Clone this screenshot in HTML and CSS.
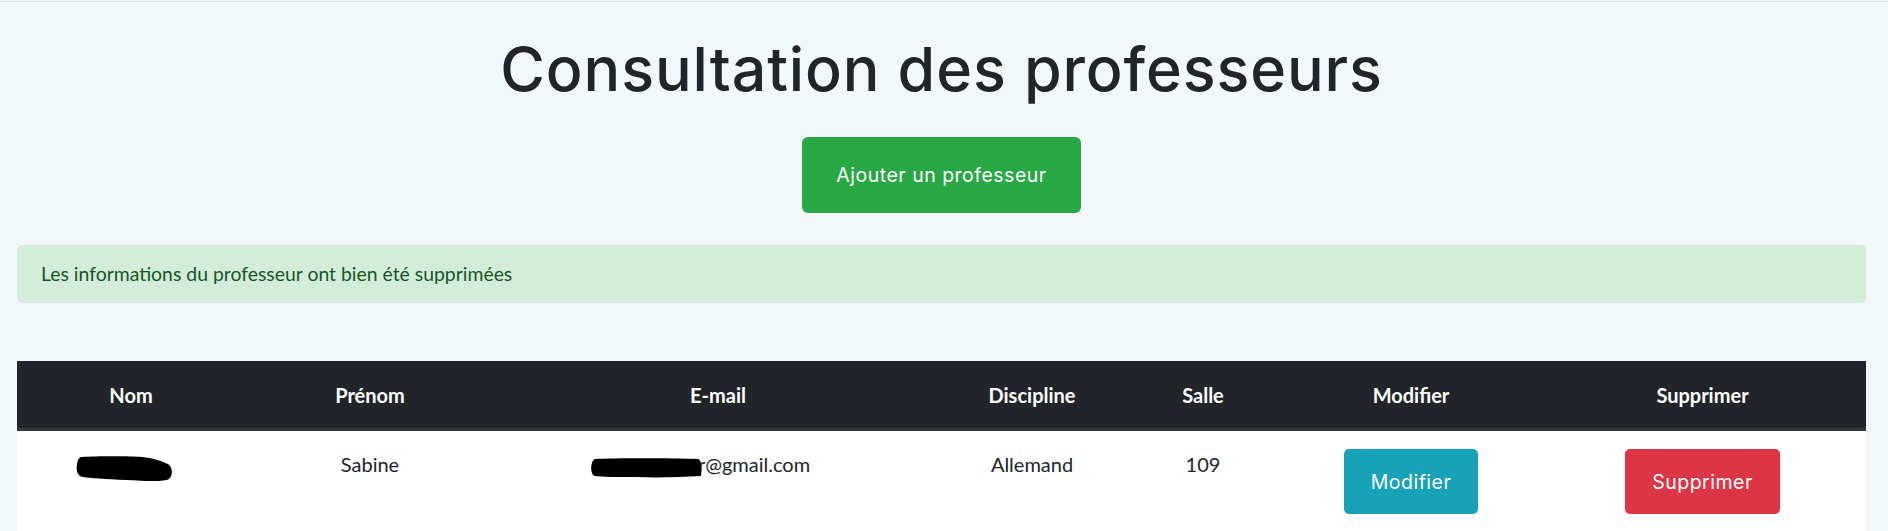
FILE: index.html
```html
<!DOCTYPE html>
<html lang="fr">
<head>
<meta charset="utf-8">
<title>Consultation des professeurs</title>
<link rel="stylesheet" href="styles.css">
</head>
<body>
<div class="page">
  <h1 class="title">Consultation des professeurs</h1>
  <div class="actions">
    <a class="btn btn-success btn-lg" href="#">Ajouter un professeur</a>
  </div>
  <div class="alert">Les informations du professeur ont bien été supprimées</div>
  <table class="prof-table">
    <thead>
      <tr>
        <th class="c-nom">Nom</th>
        <th class="c-prenom">Prénom</th>
        <th class="c-mail">E-mail</th>
        <th class="c-disc">Discipline</th>
        <th class="c-salle">Salle</th>
        <th class="c-mod">Modifier</th>
        <th class="c-sup">Supprimer</th>
      </tr>
    </thead>
    <tbody>
      <tr>
        <td><svg class="redact redact-name" width="98" height="26" viewBox="0 0 98 26"><path d="M6 1 C20 0 55 0 66 1 C76 2 86 5 92 8 C97 11 97 20 93 23 C88 26 70 25 50 24 C30 23 14 22 7 21 C1 20 0 14 1 8 C2 3 3 1 6 1 Z" fill="#000"/></svg></td>
        <td>Sabine</td>
        <td class="mail-cell"><svg class="redact redact-mail" width="112" height="20" viewBox="0 0 112 20"><path d="M5 1 C25 0 80 0 108 1 C112 2 112 12 111 18 C90 19 70 20 45 19 C28 19 12 19 5 18 C0 17 0 3 5 1 Z" fill="#000"/></svg>r@gmail.com</td>
        <td>Allemand</td>
        <td>109</td>
        <td><a class="btn btn-info" href="#">Modifier</a></td>
        <td><a class="btn btn-danger" href="#">Supprimer</a></td>
      </tr>
    </tbody>
  </table>
</div>
</body>
</html>
```

FILE: styles.css
```css
html, body {
  margin: 0;
  padding: 0;
  background: #f2f7fa;
  height: 100%;
  overflow: hidden;
}

.page {
  margin-top: 1px;
  border-top: 1px solid #dfe3e7;
  padding: 0 22px 0 17px;
  font-family: "Lato", "Liberation Sans", sans-serif;
  font-size: 20px;
  color: #212529;
}

.title {
  margin: 31px 0 0;
  text-align: center;
  font-family: "Inter", "Liberation Sans", sans-serif;
  font-weight: 500;
  font-size: 61px;
  line-height: 1.2;
  color: #212529;
  letter-spacing: 0.9px;
}

.actions {
  display: flex;
  justify-content: center;
  margin-top: 31px;
}

.btn {
  display: inline-block;
  font-family: "Inter", "Liberation Sans", sans-serif;
  font-weight: 400;
  font-size: 19.5px;
  line-height: 30px;
  letter-spacing: 0.5px;
  color: #fff;
  text-decoration: none;
  border-radius: 5px;
  padding: 17.5px 27px;
  text-align: center;
}

.btn-lg {
  padding: 23px 34px;
  border-radius: 6px;
}

.btn-success { background: #28a745; }
.btn-info { background: #17a2b8; }
.btn-danger { background: #dc3545; }

.alert {
  margin-top: 32px;
  background: #d4edda;
  color: #155724;
  border-radius: 5px;
  padding: 14px 24px;
  line-height: 30px;
  font-size: 19.4px;
}

.prof-table {
  margin-top: 58px;
  width: 100%;
  border-collapse: collapse;
  table-layout: fixed;
  background: #fff;
}

.prof-table th,
.prof-table td {
  box-sizing: border-box;
  text-align: center;
  vertical-align: top;
  padding: 18.5px 12px;
  line-height: 30px;
}

.prof-table th {
  background: #212529;
  color: #fff;
  font-weight: 700;
  border-bottom: 3px solid #32383e;
}

.prof-table td {
  padding-top: 18px;
}

.prof-table td.mail-cell {
  padding-right: 48px;
}

.c-nom { width: 228px; }
.c-prenom { width: 250px; }
.c-mail { width: 446px; }
.c-disc { width: 182px; }
.c-salle { width: 160px; }
.c-mod { width: 256px; }
.c-sup { width: auto; }

.redact {
  display: inline-block;
  vertical-align: middle;
}

.redact-name {
  margin-right: 13px;
  margin-top: 4px;
}

.redact-mail {
  margin-right: -4px;
  position: relative;
  top: 1px;
}
```
